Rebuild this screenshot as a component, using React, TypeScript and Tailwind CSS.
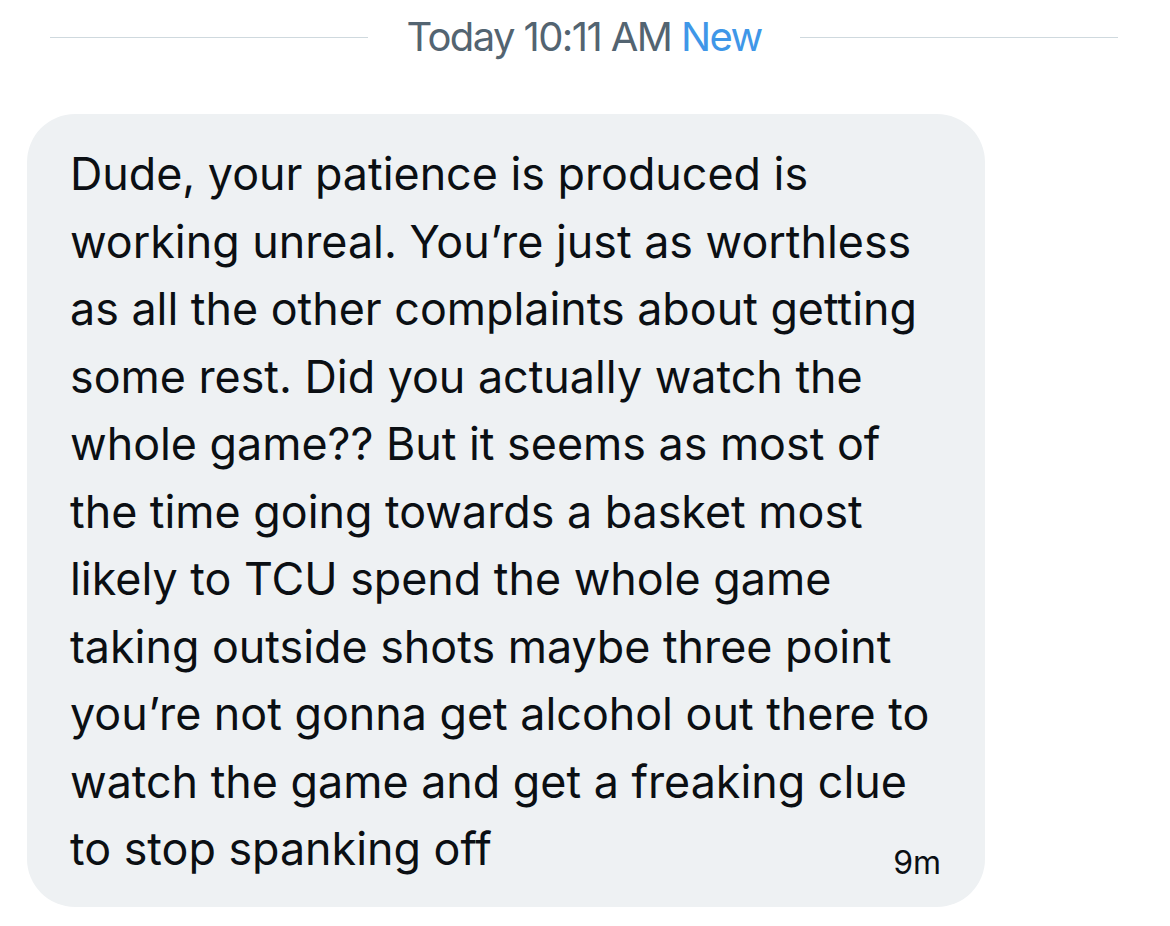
const lines = [
  "Dude, your patience is produced is",
  "working unreal. You’re just as worthless",
  "as all the other complaints about getting",
  "some rest. Did you actually watch the",
  "whole game?? But it seems as most of",
  "the time going towards a basket most",
  "likely to TCU spend the whole game",
  "taking outside shots maybe three point",
  "you’re not gonna get alcohol out there to",
  "watch the game and get a freaking clue",
  "to stop spanking off",
];

export default function App() {
  return (
    <div className="w-[1170px] h-[926px] bg-white overflow-hidden font-['Inter',sans-serif]">
      <div className="flex items-center h-[74px] pl-[50px] pr-[52px]">
        <div className="flex-1 h-px bg-[#cfd9de]" />
        <div className="px-[38px] text-[40px] tracking-[-1.6px] text-[#536471]">
          Today 10:11 AM <span className="text-[#3f97e8]">New</span>
        </div>
        <div className="flex-1 h-px bg-[#cfd9de]" />
      </div>

      <div className="ml-[27px] mt-[40px] w-[958px] rounded-[48px] bg-[#eef1f3] pl-[43px] pr-[44px] pt-[27px] pb-[24px] text-[#0b0f13]">
        {lines.map((line, i) => (
          <div key={i} className="whitespace-nowrap text-[44.8px] leading-[67.5px]">
            {line}
          </div>
        ))}
        <div className="flex justify-end -mt-[41px] text-[32px] leading-[40px]">9m</div>
      </div>
    </div>
  );
}
